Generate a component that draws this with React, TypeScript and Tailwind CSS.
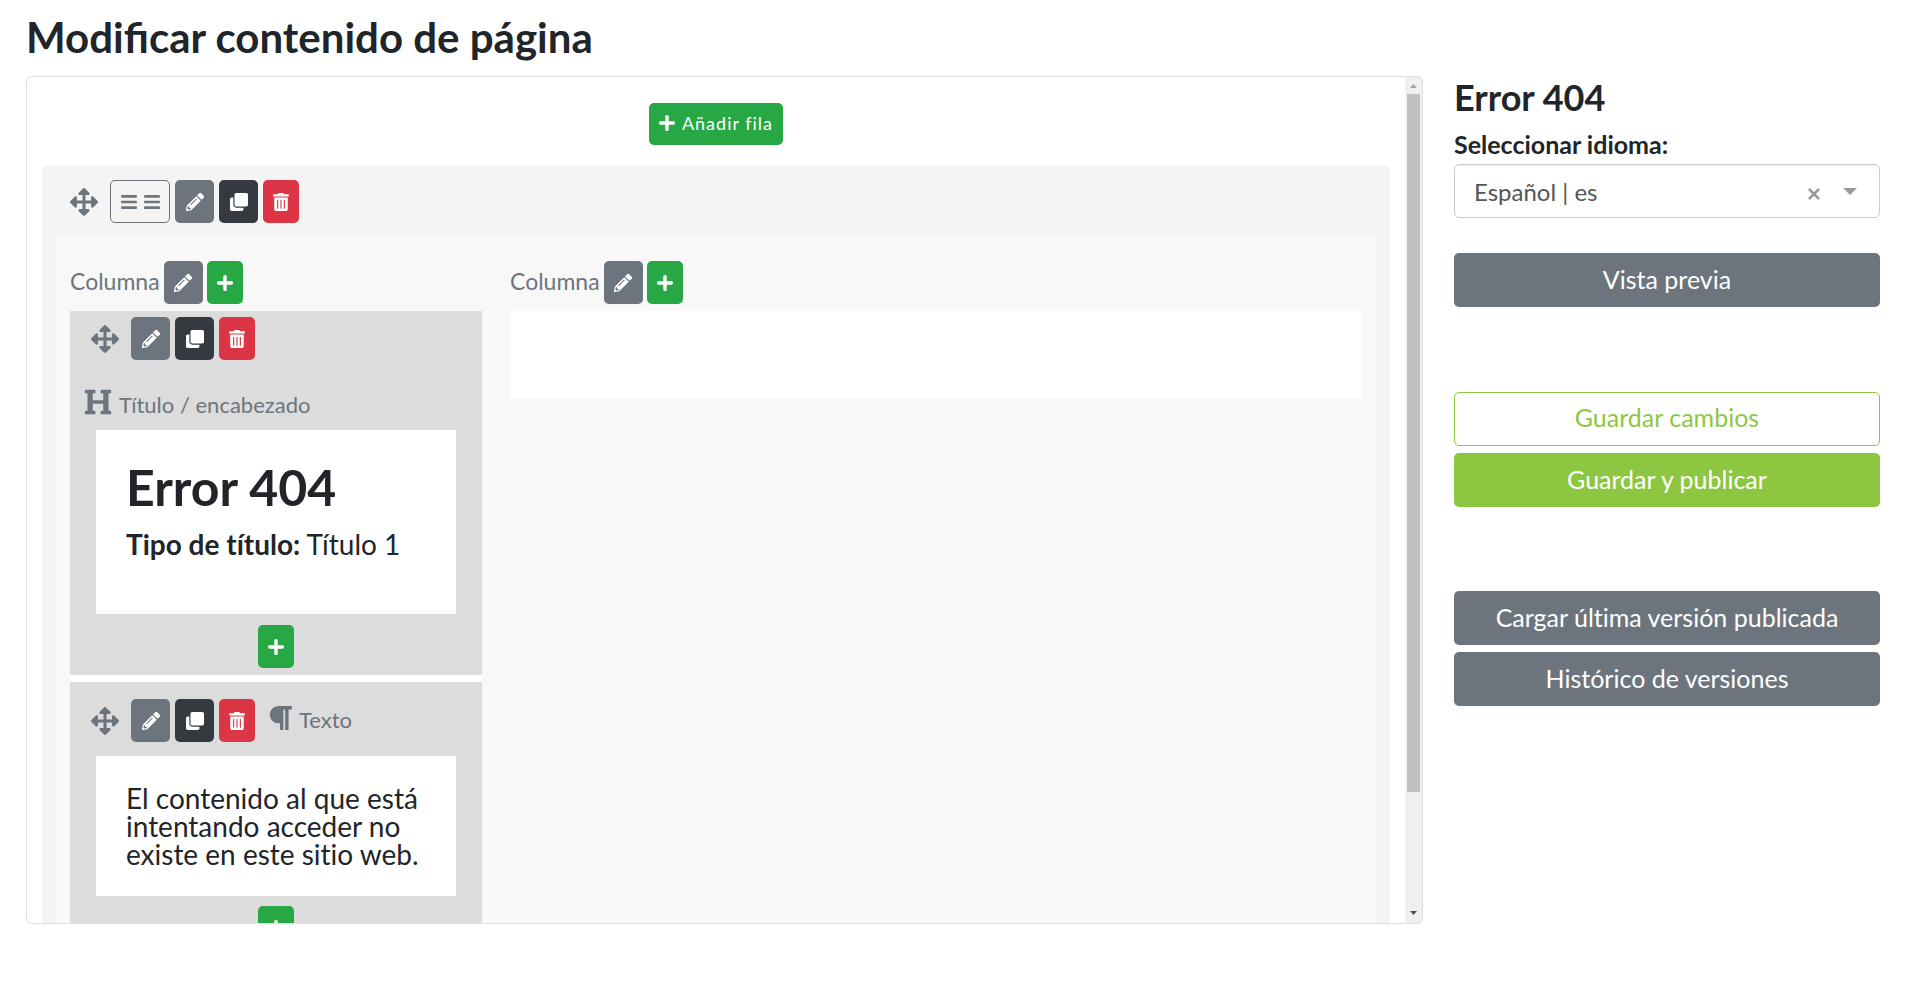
import { useState } from "react";
import type { ReactNode } from "react";
import {
  FaArrowsAlt,
  FaBars,
  FaClone,
  FaHeading,
  FaParagraph,
  FaPencilAlt,
  FaPlus,
  FaTrashAlt,
} from "react-icons/fa";

const tones = {
  gray: "w-[39px] bg-[#6c757d] text-white",
  dark: "w-[39px] bg-[#343a40] text-white",
  red: "w-9 bg-[#dc3545] text-white",
  green: "w-9 bg-[#28a745] text-white",
  outline: "w-[60px] border border-[#6c757d] text-[#6c757d]",
};

function IconButton({
  label,
  tone,
  children,
}: {
  label: string;
  tone: keyof typeof tones;
  children: ReactNode;
}) {
  return (
    <button
      type="button"
      aria-label={label}
      className={`flex h-[43px] shrink-0 items-center justify-center gap-[7px] rounded-[5px] text-[18px] ${tones[tone]}`}
    >
      {children}
    </button>
  );
}

const Edit = () => (
  <IconButton label="Editar" tone="gray">
    <FaPencilAlt />
  </IconButton>
);

const Add = () => (
  <IconButton label="Añadir" tone="green">
    <FaPlus className="w-4" />
  </IconButton>
);

function Tools({ layout = false }: { layout?: boolean }) {
  return (
    <div className="flex items-center gap-[5px]">
      <FaArrowsAlt className="mr-[7px] shrink-0 text-[28px] text-[#6c757d]" />
      {layout && (
        <IconButton label="Distribución" tone="outline">
          <FaBars className="w-4" />
          <FaBars className="w-4" />
        </IconButton>
      )}
      <Edit />
      <IconButton label="Duplicar" tone="dark">
        <FaClone />
      </IconButton>
      <IconButton label="Eliminar" tone="red">
        <FaTrashAlt className="w-4" />
      </IconButton>
    </div>
  );
}

function ColumnHeader() {
  return (
    <div className="mb-[7px] flex items-center gap-1">
      <span className="pb-[2px] text-[23px] text-[#6c757d]">Columna</span>
      <Edit />
      <Add />
    </div>
  );
}

function SideButton({ kind, children }: { kind: "gray" | "green" | "outline"; children: ReactNode }) {
  const look = {
    gray: "bg-[#6c757d] text-white",
    green: "bg-[#8dc742] text-white",
    outline: "border border-[#8dc742] pb-[2px] text-[#8dc742]",
  }[kind];
  return (
    <button type="button" className={`h-[54px] w-full rounded-[5px] text-[25px] ${look}`}>
      {children}
    </button>
  );
}

function Scrollbar() {
  return (
    <div aria-hidden="true" className="flex w-[17px] shrink-0 flex-col items-center bg-[#f0f0f0]">
      <svg className="h-[17px] w-[17px] shrink-0" viewBox="0 0 17 17">
        <path d="M5 11h7L8.500 7z" fill="#a3a3a3" />
      </svg>
      <div className="flex w-[13px] flex-1 flex-col">
        <div className="h-[86%] bg-[#c1c1c1]" />
      </div>
      <svg className="h-[17px] w-[17px] shrink-0" viewBox="0 0 17 17">
        <path d="M5 5h7L8.500 9z" fill="#505050" />
      </svg>
    </div>
  );
}

export default function App() {
  const [language, setLanguage] = useState("es");
  return (
    <div className="flex h-screen flex-col pt-[11px] pr-[39px] pb-[71px] pl-[26px] font-['Lato',sans-serif] text-[#212529]">
      <h1 className="mb-[13px] text-[42px] leading-[52px] font-bold">
        Modificar contenido de página
      </h1>
      <div className="flex min-h-0 flex-1 gap-[31px] [font-variant-ligatures:none]">
        <main className="flex min-w-0 flex-1 overflow-hidden rounded-[5px] border border-[#dfdfdf]">
          <div className="min-w-0 flex-1 overflow-hidden px-[15px] pt-[26px]">
            <div className="mb-[21px] flex justify-center">
              <button
                type="button"
                className="flex h-[42px] items-center gap-[7px] rounded-[5px] bg-[#28a745] px-[10px] pb-[2px] text-[18px] tracking-[1px] text-white"
              >
                <FaPlus className="w-4" />
                Añadir fila
              </button>
            </div>
            <section className="bg-[#f4f4f4] px-[14px] pt-[14px] pb-[14px]">
              <div className="mb-[13px] pl-[14px]">
                <Tools layout />
              </div>
              <div className="grid grid-cols-[1fr_2fr] bg-[#f8f8f8] pt-[25px] pb-[25px]">
                <div className="px-[14px]">
                  <ColumnHeader />
                  <div className="flex flex-col gap-[7px] bg-white">
                    <article className="bg-[#dcdcdc] px-[26px] pt-[6px] pb-[7px]">
                      <div className="-ml-[5px]">
                        <Tools />
                      </div>
                      <div className="-ml-[12px] mt-[28px] mb-[14px] flex h-[28px] items-center gap-[7px] text-[#6c757d]">
                        <FaHeading className="text-[28px]" />
                        <span className="pt-[5px] text-[22px]">Título / encabezado</span>
                      </div>
                      <div className="mb-[11px] bg-white px-[30px] pt-[27px] pb-[28px]">
                        <h2 className="mb-[13px] text-[50px] leading-[60px] font-bold">Error 404</h2>
                        <p className="mb-[28px] text-[28px] leading-[28px]">
                          <strong>Tipo de título:</strong> Título 1
                        </p>
                      </div>
                      <div className="flex justify-center">
                        <Add />
                      </div>
                    </article>
                    <article className="bg-[#dcdcdc] px-[26px] pt-[17px] pb-[7px]">
                      <div className="-ml-[5px] mb-[14px] flex items-center">
                        <Tools />
                        <FaParagraph className="mb-[5px] ml-[13px] w-6 text-[28px] text-[#6c757d]" />
                        <span className="ml-[7px] pb-[2px] text-[22px] text-[#6c757d]">Texto</span>
                      </div>
                      <div className="mb-[10px] bg-white px-[30px] py-[28px]">
                        <p className="text-[28px] leading-[28px]">
                          El contenido al que está intentando acceder no existe en este sitio web.
                        </p>
                      </div>
                      <div className="flex justify-center">
                        <Add />
                      </div>
                    </article>
                  </div>
                </div>
                <div className="px-[14px]">
                  <ColumnHeader />
                  <div className="h-[87px] bg-white" />
                </div>
              </div>
            </section>
          </div>
          <Scrollbar />
        </main>
        <aside className="w-[426px] shrink-0">
          <h2 className="mb-[8px] text-[36px] leading-[42px] font-bold">Error 404</h2>
          <label htmlFor="language" className="mb-px block text-[25px] leading-[37px] font-bold">
            Seleccionar idioma:
          </label>
          <div className="relative mb-[35px]">
            <select
              id="language"
              value={language}
              onChange={(e) => setLanguage(e.target.value)}
              className="block h-[54px] w-full appearance-none rounded-[5px] border border-[#cccccc] bg-white pt-[2px] pr-[80px] pl-[19px] text-[24px] text-[#555555] shadow-[inset_0_1px_1px_rgba(0,0,0,0.075)]"
            >
              <option value="es">Español | es</option>
            </select>
            <div className="pointer-events-none absolute inset-y-0 right-[23px] flex items-center gap-[23px] text-[#999999]">
              <svg className="mt-[5px] h-3 w-3" viewBox="0 0 12 12" stroke="currentColor" strokeWidth="2.600">
                <path d="M1 1l10 10M11 1L1 11" />
              </svg>
              <svg className="h-[7px] w-[14px]" viewBox="0 0 14 7" fill="currentColor">
                <path d="M0 0h14L7 7z" />
              </svg>
            </div>
          </div>
          <SideButton kind="gray">Vista previa</SideButton>
          <div className="mt-[85px] flex flex-col gap-[7px]">
            <SideButton kind="outline">Guardar cambios</SideButton>
            <SideButton kind="green">Guardar y publicar</SideButton>
          </div>
          <div className="mt-[84px] flex flex-col gap-[7px]">
            <SideButton kind="gray">Cargar última versión publicada</SideButton>
            <SideButton kind="gray">Histórico de versiones</SideButton>
          </div>
        </aside>
      </div>
    </div>
  );
}
